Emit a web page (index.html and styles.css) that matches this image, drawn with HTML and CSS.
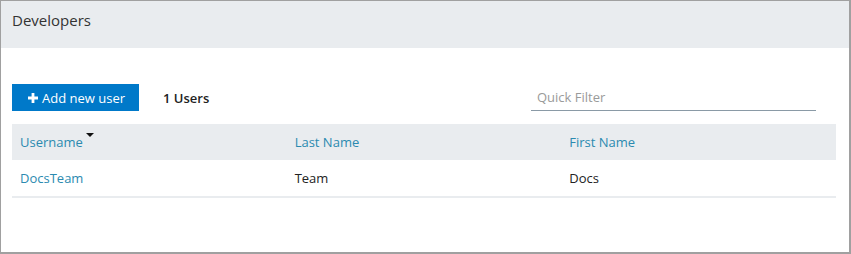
FILE: index.html
```html
<!DOCTYPE html>
<html lang="en">
<head>
    <meta charset="UTF-8">
    <title>Developers</title>
    <link rel="stylesheet" href="styles.css">
</head>
<body>
    <div class="frame">
        <div class="page-header">Developers</div>

        <div class="content">
            <div class="toolbar">
                <button class="add-btn">
                    <svg class="plus" width="10" height="10" viewBox="0 0 10 10"><path d="M3.6 0h2.8v3.6H10v2.8H6.4V10H3.6V6.4H0V3.6h3.6z" fill="#fff"/></svg>
                    Add new user
                </button>
                <span class="count">1 Users</span>
                <input type="text" class="filter" placeholder="Quick Filter">
            </div>

            <table class="grid">
                <thead>
                    <tr>
                        <th>Username<span class="sort"></span></th>
                        <th>Last Name</th>
                        <th>First Name</th>
                    </tr>
                </thead>
                <tbody>
                    <tr>
                        <td class="link">DocsTeam</td>
                        <td>Team</td>
                        <td>Docs</td>
                    </tr>
                </tbody>
            </table>
        </div>
    </div>
</body>
</html>
```

FILE: styles.css
```css
body {
    margin: 0;
    font-family: "Open Sans", sans-serif;
    color: #222;
    background: #fff;
}

.frame {
    width: 851px;
    height: 254px;
    box-sizing: border-box;
    border: 1px solid #a0a0a0;
    border-right-width: 2px;
    border-bottom-width: 2px;
}

.page-header {
    height: 47px;
    background-color: #e9ecef;
    padding: 9px 11px;
    box-sizing: border-box;
    font-size: 15px;
    color: #333;
}

.content {
    padding: 36px 13px 0 11px;
}

.toolbar {
    display: flex;
    align-items: center;
    height: 27px;
}

.add-btn {
    display: flex;
    align-items: center;
    justify-content: center;
    gap: 4px;
    background-color: #0079c9;
    color: #fff;
    border: none;
    height: 27px;
    width: 127px;
    padding: 0 0 0 2px;
    font-family: "Open Sans", sans-serif;
    font-size: 13px;
    cursor: pointer;
}

.count {
    margin-left: 24px;
    font-size: 13px;
    font-weight: 600;
    color: #222;
}

.filter {
    margin-left: auto;
    margin-right: 20px;
    width: 285px;
    height: 27px;
    box-sizing: border-box;
    border: none;
    border-bottom: 1px solid #8a9aa6;
    padding: 0 6px;
    font-family: "Open Sans", sans-serif;
    font-size: 13px;
    outline: none;
}

.filter::placeholder {
    color: #9a9a9a;
}

.grid {
    width: 824px;
    margin-top: 13px;
    border-collapse: collapse;
    font-size: 13px;
}

.grid th {
    background-color: #e9ecef;
    color: #2b8ab0;
    font-weight: normal;
    text-align: left;
    height: 36px;
    padding: 0 8px;
    width: 33.3%;
}

.grid td {
    height: 36px;
    padding: 0 8px;
    border-bottom: 2px solid #e9ecef;
    color: #222;
}

.grid td.link {
    color: #2b8ab0;
}

.sort {
    display: inline-block;
    width: 0;
    height: 0;
    border-left: 4px solid transparent;
    border-right: 4px solid transparent;
    border-top: 4px solid #111;
    vertical-align: 10px;
    margin-left: 3px;
}
```
